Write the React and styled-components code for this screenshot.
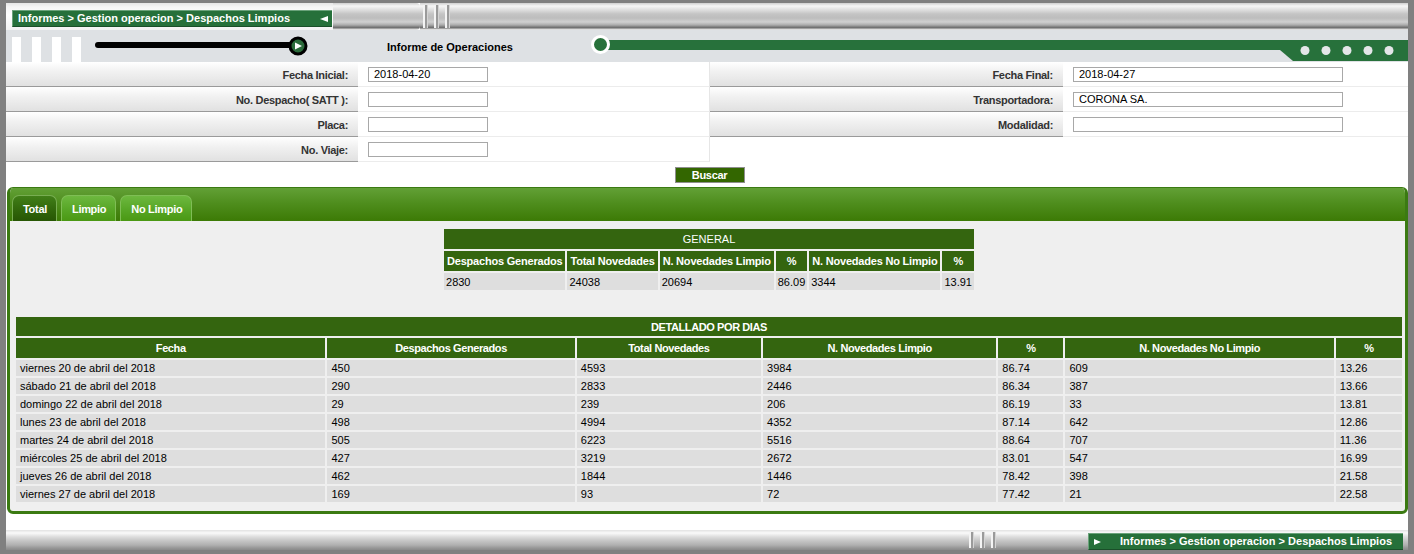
import React from 'react';
import styled, { createGlobalStyle, css } from 'styled-components';

const Global = createGlobalStyle`
  html, body { margin: 0; padding: 0; background: #808080; }
  body { font-family: "Liberation Sans", Arial, sans-serif; font-size: 11px; color: #000; }
  * { box-sizing: border-box; }
`;

const metal = css`
  background: linear-gradient(to bottom, #cfcfcf 0, #f7f7f7 3px, #e4e4e4 6px, #c4c4c4 11px, #bdbdbd 15px, #d0d0d0 19px, #ababab 22px, #7a7a7a 24px, #6a6a6a 25px, #d8d8d8 26px, #e2e2e2 27px);
`;

const metalLow = css`
  background: linear-gradient(to bottom, #e2e2e2 0, #fafafa 3px, #dcdcdc 7px, #c4c4c4 11px, #b0b0b0 15px, #979797 18px, #8a8a8a 20px);
`;

const Frame = styled.div`
  width: 1414px;
  height: 554px;
  padding: 3px 6px 4px 6px;
  background: #808080;
  display: flex;
  flex-direction: column;
`;

const Page = styled.div`
  flex: 1;
  background: #fff;
  display: flex;
  flex-direction: column;
  overflow: hidden;
`;

/* ---------- top bar ---------- */
const TopBar = styled.div`
  height: 27px;
  display: flex;
  align-items: stretch;
  flex-shrink: 0;
`;

const CrumbArea = styled.div`
  width: 327px;
  background: linear-gradient(to bottom, #e6e6e6 0, #f6f6f6 4px, #ffffff 12px, #f2f2f2 27px);
  display: flex;
  align-items: flex-start;
  padding: 7px 0 0 6px;
`;

const Crumb = styled.div`
  height: 17px;
  width: ${p => p.$w}px;
  background: #26703a;
  border-top: 1px solid #6aa27a;
  border-left: 1px solid #6aa27a;
  border-bottom: 1px solid #1a4f29;
  color: #fff;
  font-weight: bold;
  font-size: 11px;
  line-height: 15px;
  display: flex;
  align-items: center;
  justify-content: space-between;
  padding: 0 4px 0 5px;
  white-space: nowrap;
`;

const Metal = styled.div`
  ${metal};
  flex: ${p => (p.$w ? `0 0 ${p.$w}px` : '1')};
  border-radius: ${p => (p.$round ? '0 4px 4px 0' : '0')};
`;

const MetalLow = styled.div`
  ${metalLow};
  flex: ${p => (p.$w ? `0 0 ${p.$w}px` : '1')};
`;

const Ribs = styled.div`
  flex: 0 0 ${p => p.$w}px;
  position: relative;
  ${metal};
  &::after {
    content: '';
    position: absolute;
    inset: 2px 0 2px 0;
    background: repeating-linear-gradient(to right, transparent 0 3px, #f4f4f4 3px 5px, #9a9a9a 5px 7px, #d4d4d4 7px 8px, transparent 8px 11px);
  }
`;

const RibsLow = styled(Ribs)`
  ${metalLow};
`;

/* ---------- banner ---------- */
const Banner = styled.div`
  height: 32px;
  flex-shrink: 0;
  background: #dee1e4;
  display: flex;
  align-items: flex-start;
`;

const Bars = styled.div`
  display: flex;
  gap: 11px;
  margin-left: 6px;
  padding-top: 7px;
`;

const Bar = styled.span`
  display: block;
  width: 9px;
  height: 25px;
  background: #fff;
`;

const SliderSvg = styled.svg`
  margin-left: 12px;
  flex-shrink: 0;
`;

const Title = styled.div`
  margin-left: 78px;
  padding-top: 10px;
  font-weight: bold;
  font-size: 11px;
  line-height: 14px;
  white-space: nowrap;
`;

const Track = styled.div`
  flex: 1;
  margin-left: 78px;
  height: 32px;
  position: relative;
  display: flex;
  align-items: flex-start;
`;

const TrackKnob = styled.span`
  width: 19px;
  height: 19px;
  margin-top: 5px;
  border-radius: 50%;
  background: #27713b;
  border: 3px solid #fff;
  flex-shrink: 0;
  position: relative;
  z-index: 1;
`;

const TrackLine = styled.span`
  flex: 1;
  height: 10px;
  margin-top: 10px;
  margin-left: -4px;
  background: #27713b;
`;

const TrackTab = styled.svg`
  position: absolute;
  right: 0;
  top: 10px;
`;

/* ---------- form ---------- */
const FormGrid = styled.div`
  display: grid;
  grid-template-columns: 352px 352px 353px 1fr;
  grid-auto-rows: 25px;
  flex-shrink: 0;
`;

const Label = styled.div`
  background: linear-gradient(to bottom, #ffffff 0, #f1f1f1 40%, #e1e1e1 100%);
  border-bottom: 1px solid #9a9a9a;
  display: flex;
  align-items: center;
  justify-content: flex-end;
  padding: 1px 10px 0 0;
  font-weight: bold;
  color: #333;
  letter-spacing: -0.3px;
  white-space: nowrap;
`;

const Field = styled.div`
  background: #fff;
  border-bottom: 1px solid #ececec;
  border-right: ${p => (p.$sep ? '1px solid #e6e6e6' : '0')};
  display: flex;
  align-items: center;
  padding-left: 10px;
`;

const Blank = styled.div`
  background: #fff;
`;

const Input = styled.input`
  width: ${p => p.$w}px;
  height: 15px;
  border: 1px solid #a8a8a8;
  padding: 0 0 0 5px;
  margin: 0;
  font-family: "Liberation Sans", Arial, sans-serif;
  font-size: 11px;
  color: #000;
  background: #fff;
  outline: none;
`;

const ButtonRow = styled.div`
  height: 25px;
  flex-shrink: 0;
  display: flex;
  justify-content: center;
  align-items: flex-start;
  padding-top: 5px;
  padding-left: 5px;
`;

const Button = styled.button`
  width: 70px;
  height: 16px;
  padding: 0;
  background: #336600;
  border: 1px solid #8f8f8f;
  color: #fff;
  font-family: "Liberation Sans", Arial, sans-serif;
  font-weight: bold;
  font-size: 11px;
  line-height: 14px;
  letter-spacing: -0.3px;
`;

/* ---------- panel ---------- */
const Panel = styled.section`
  height: 327px;
  flex-shrink: 0;
  margin-left: 1px;
  border: 3px solid #3b7a12;
  border-top: 1px solid #3b7a12;
  border-radius: 6px;
  background: #efefef;
  display: flex;
  flex-direction: column;
  overflow: hidden;
`;

const TabBar = styled.div`
  height: 33px;
  flex-shrink: 0;
  background: linear-gradient(to bottom, #62a036 0, #4f8e1e 45%, #3c7a05 100%);
  display: flex;
  align-items: flex-end;
  gap: 4px;
  padding-left: 2px;
`;

const Tab = styled.div`
  height: 26px;
  padding: 0 9px 0 10px;
  border-radius: 7px 7px 0 0;
  border: 1px solid ${p => (p.$active ? '#78ad52' : '#7fbe55')};
  border-bottom: 0;
  background: ${p =>
    p.$active
      ? 'linear-gradient(to bottom, #417f18 0, #30650a 60%, #275604 100%)'
      : 'linear-gradient(to bottom, #6db83f 0, #57a626 55%, #4a9813 100%)'};
  color: #fff;
  font-weight: bold;
  font-size: 11px;
  letter-spacing: -0.3px;
  display: flex;
  align-items: center;
`;

const Content = styled.div`
  flex: 1;
  padding: 6px 1px 0 4px;
  display: flex;
  flex-direction: column;
`;

const Table = styled.table`
  border-collapse: separate;
  border-spacing: 2px;
  font-size: 11px;
  ${p => (p.$fixed ? 'table-layout: fixed;' : '')}
  ${p => (p.$w ? `width: ${p.$w}px;` : '')}
  margin: ${p => p.$margin};
`;

const Col = styled.col`
  width: ${p => p.$w}px;
`;

const Caption = styled.th`
  height: ${p => p.$h}px;
  background: #34650f;
  color: #fff;
  font-weight: ${p => (p.$bold ? 'bold' : 'normal')};
  text-align: center;
  padding: 0;
  letter-spacing: ${p => (p.$bold ? '-0.4px' : '0')};
`;

const Head = styled.th`
  height: ${p => p.$h}px;
  background: #34650f;
  color: #fff;
  font-weight: bold;
  text-align: center;
  padding: 0 3px;
  white-space: nowrap;
  letter-spacing: ${p => p.$ls}px;
`;

const Cell = styled.td`
  height: ${p => p.$h}px;
  background: #dedede;
  padding: 0 2px 0 ${p => p.$pl}px;
  white-space: nowrap;
  text-align: left;
  color: #000;
`;

const Gap = styled.div`
  height: 16px;
  flex-shrink: 0;
`;

const BottomBar = styled.div`
  height: 20px;
  flex-shrink: 0;
  display: flex;
  align-items: stretch;
`;

const CrumbHolder = styled.div`
  ${metalLow};
  display: flex;
  align-items: flex-end;
`;

const Arrow = styled.span`
  width: 0;
  height: 0;
  flex-shrink: 0;
  border-top: 3px solid transparent;
  border-bottom: 3px solid transparent;
  ${p => (p.$dir === 'left' ? 'border-right: 8px solid #fff;' : 'border-left: 7px solid #fff;')}
`;

const CrumbText = styled.span`
  margin-left: ${p => (p.$push ? '19px' : '0')};
  flex: ${p => (p.$push ? 1 : 'none')};
`;

const general = {
  heads: ['Despachos Generados', 'Total Novedades', 'N. Novedades Limpio', '%', 'N. Novedades No Limpio', '%'],
  row: ['2830', '24038', '20694', '86.09', '3344', '13.91'],
};

const detailHeads = ['Fecha', 'Despachos Generados', 'Total Novedades', 'N. Novedades Limpio', '%', 'N. Novedades No Limpio', '%'];
const detailCols = [309, 247, 184, 233, 65, 268, 66];
const detailRows = [
  ['viernes 20 de abril del 2018', '450', '4593', '3984', '86.74', '609', '13.26'],
  ['sábado 21 de abril del 2018', '290', '2833', '2446', '86.34', '387', '13.66'],
  ['domingo 22 de abril del 2018', '29', '239', '206', '86.19', '33', '13.81'],
  ['lunes 23 de abril del 2018', '498', '4994', '4352', '87.14', '642', '12.86'],
  ['martes 24 de abril del 2018', '505', '6223', '5516', '88.64', '707', '11.36'],
  ['miércoles 25 de abril del 2018', '427', '3219', '2672', '83.01', '547', '16.99'],
  ['jueves 26 de abril del 2018', '462', '1844', '1446', '78.42', '398', '21.58'],
  ['viernes 27 de abril del 2018', '169', '93', '72', '77.42', '21', '22.58'],
];

const crumb = 'Informes > Gestion operacion > Despachos Limpios';

export default function App() {
  return (
    <>
      <Global />
      <Frame>
        <Page>
          <TopBar>
            <CrumbArea>
              <Crumb $w={320}>
                <CrumbText>{crumb}</CrumbText>
                <Arrow $dir="left" />
              </Crumb>
            </CrumbArea>
            <Metal $w={87} $round />
            <Ribs $w={33} />
            <Metal />
          </TopBar>

          <Banner>
            <Bars>
              <Bar />
              <Bar />
              <Bar />
              <Bar />
            </Bars>
            <SliderSvg width="216" height="32" viewBox="0 0 216 32">
              <line x1="5" y1="15" x2="200" y2="15" stroke="#000" strokeWidth="6" strokeLinecap="round" />
              <circle cx="205" cy="16" r="8" fill="#2b6b3b" stroke="#000" strokeWidth="3" />
              <polygon points="202,12.5 202,19.5 209,16" fill="#fff" />
            </SliderSvg>
            <Title>Informe de Operaciones</Title>
            <Track>
              <TrackKnob />
              <TrackLine />
              <TrackTab width="128" height="21" viewBox="0 0 128 21">
                <polygon points="0,0 128,0 128,21 13,21 0,10" fill="#27713b" />
                {[25, 46, 67, 88, 109].map(cx => (
                  <circle key={cx} cx={cx} cy="10.5" r="4.5" fill="#e4e6e8" />
                ))}
              </TrackTab>
            </Track>
          </Banner>

          <FormGrid>
            <Label>Fecha Inicial:</Label>
            <Field $sep><Input $w={120} defaultValue="2018-04-20" /></Field>
            <Label>Fecha Final:</Label>
            <Field><Input $w={270} defaultValue="2018-04-27" /></Field>

            <Label>No. Despacho( SATT ):</Label>
            <Field $sep><Input $w={120} defaultValue="" /></Field>
            <Label>Transportadora:</Label>
            <Field><Input $w={270} defaultValue="CORONA SA." /></Field>

            <Label>Placa:</Label>
            <Field $sep><Input $w={120} defaultValue="" /></Field>
            <Label>Modalidad:</Label>
            <Field><Input $w={270} defaultValue="" /></Field>

            <Label>No. Viaje:</Label>
            <Field $sep><Input $w={120} defaultValue="" /></Field>
            <Blank />
            <Blank />
          </FormGrid>

          <ButtonRow>
            <Button type="button">Buscar</Button>
          </ButtonRow>

          <Panel>
            <TabBar>
              <Tab $active>Total</Tab>
              <Tab>Limpio</Tab>
              <Tab>No Limpio</Tab>
            </TabBar>
            <Content>
              <Table $margin="0 auto">
                <thead>
                  <tr>
                    <Caption colSpan={6} $h={20}>GENERAL</Caption>
                  </tr>
                  <tr>
                    {general.heads.map((h, i) => (
                      <Head key={i} $h={20} $ls={-0.2}>{h}</Head>
                    ))}
                  </tr>
                </thead>
                <tbody>
                  <tr>
                    {general.row.map((v, i) => (
                      <Cell key={i} $h={17} $pl={2}>{v}</Cell>
                    ))}
                  </tr>
                </tbody>
              </Table>

              <Table $fixed $w={1390} $margin="23px 0 0 0">
                <colgroup>
                  {detailCols.map((w, i) => (
                    <Col key={i} $w={w} />
                  ))}
                </colgroup>
                <thead>
                  <tr>
                    <Caption colSpan={7} $h={19} $bold>DETALLADO POR DIAS</Caption>
                  </tr>
                  <tr>
                    {detailHeads.map((h, i) => (
                      <Head key={i} $h={20} $ls={-0.4}>{h}</Head>
                    ))}
                  </tr>
                </thead>
                <tbody>
                  {detailRows.map((r, ri) => (
                    <tr key={ri}>
                      {r.map((v, ci) => (
                        <Cell key={ci} $h={16} $pl={4}>{v}</Cell>
                      ))}
                    </tr>
                  ))}
                </tbody>
              </Table>
            </Content>
          </Panel>

          <Gap />

          <BottomBar>
            <MetalLow />
            <RibsLow $w={34} />
            <MetalLow $w={88} />
            <CrumbHolder>
              <Crumb $w={315}>
                <Arrow $dir="right" />
                <CrumbText $push>{crumb}</CrumbText>
              </Crumb>
            </CrumbHolder>
            <MetalLow $w={5} />
          </BottomBar>
        </Page>
      </Frame>
    </>
  );
}
